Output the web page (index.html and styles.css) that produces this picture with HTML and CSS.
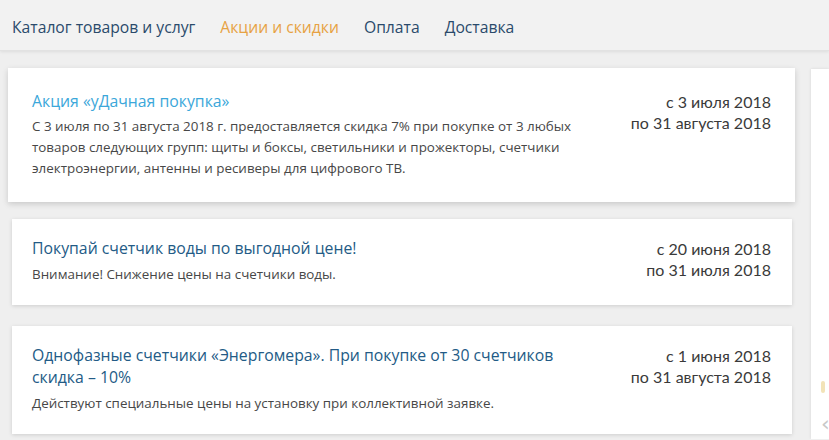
FILE: index.html
```html
<!DOCTYPE html>
<html lang="ru">
<head>
<meta charset="utf-8">
<title>Акции и скидки</title>
<link rel="stylesheet" href="styles.css">
</head>
<body>
<header class="topbar">
  <nav class="nav">
    <a class="nav-link" href="#">Каталог товаров и услуг</a>
    <a class="nav-link nav-link-active" href="#">Акции и скидки</a>
    <a class="nav-link" href="#">Оплата</a>
    <a class="nav-link" href="#">Доставка</a>
  </nav>
</header>
<div class="page">
  <main class="promo-list">
    <article class="promo promo-hover">
      <div class="promo-body">
        <a class="promo-title" href="#">Акция «уДачная покупка»</a>
        <p class="promo-text">С 3 июля по 31 августа 2018 г. предоставляется скидка 7% при покупке от 3 любых товаров следующих групп: щиты и боксы, светильники и прожекторы, счетчики электроэнергии, антенны и ресиверы для цифрового ТВ.</p>
      </div>
      <div class="promo-dates">с 3 июля 2018<br>по 31 августа 2018</div>
    </article>
    <article class="promo">
      <div class="promo-body">
        <a class="promo-title" href="#">Покупай счетчик воды по выгодной цене!</a>
        <p class="promo-text">Внимание! Снижение цены на счетчики воды.</p>
      </div>
      <div class="promo-dates">с 20 июня 2018<br>по 31 июля 2018</div>
    </article>
    <article class="promo">
      <div class="promo-body">
        <a class="promo-title" href="#">Однофазные счетчики «Энергомера». При покупке от 30 счетчиков скидка – 10%</a>
        <p class="promo-text">Действуют специальные цены на установку при коллективной заявке.</p>
      </div>
      <div class="promo-dates">с 1 июня 2018<br>по 31 августа 2018</div>
    </article>
  </main>
  <aside class="sidebar">
    <span class="sidebar-mark"></span>
    <span class="sidebar-arrow">‹</span>
  </aside>
</div>
</body>
</html>
```

FILE: styles.css
```css
html, body {
  margin: 0;
  padding: 0;
}
body {
  background: #efefef;
  font-family: "Open Sans", "Noto Sans", sans-serif;
  width: 829px;
  height: 440px;
  overflow: hidden;
}
.topbar {
  height: 51px;
  background: #f2f2f2;
  border-bottom: 1px solid #e2e2e2;
  box-shadow: 0 1px 3px rgba(0, 0, 0, 0.08);
  box-sizing: border-box;
}
.nav {
  display: flex;
  align-items: center;
  height: 100%;
  padding: 4px 0 0 12px;
  box-sizing: border-box;
  gap: 25px;
}
.nav-link {
  font-size: 15.7px;
  color: #2a4a6b;
  text-decoration: none;
  line-height: 22px;
}
.nav-link-active {
  color: #e7a244;
}
.page {
  display: flex;
  gap: 19px;
  padding-top: 21px;
  height: 388px;
  box-sizing: border-box;
  overflow: hidden;
}
.promo-list {
  width: 780px;
  flex-shrink: 0;
  margin-left: 12px;
  display: flex;
  flex-direction: column;
  gap: 21px;
}
.promo {
  display: flex;
  justify-content: space-between;
  align-items: flex-start;
  background: #fff;
  padding: 18px 21px 20px 20px;
  box-shadow: 0 1px 4px rgba(0, 0, 0, 0.14);
}
.promo-hover {
  margin: -4px -3px -4px -4px;
  padding: 22px 24px 23px 24px;
  box-shadow: 0 2px 6px rgba(0, 0, 0, 0.16);
}
.promo-body {
  width: 570px;
}
.promo-title {
  display: block;
  font-size: 15.8px;
  line-height: 22px;
  color: #235b86;
  text-decoration: none;
}
.promo-hover .promo-title {
  color: #3ba7da;
}
.promo-text {
  margin: 5px 0 0;
  font-size: 13.4px;
  line-height: 21px;
  color: #474747;
}
.promo-hover .promo-text {
  margin-top: 4px;
}
.promo-dates {
  font-family: "Lato", sans-serif;
  font-size: 16px;
  line-height: 21px;
  color: #3a3a3a;
  text-align: right;
  white-space: nowrap;
  padding-top: 1px;
}
.sidebar {
  flex: 1 1 auto;
  min-width: 0;
  margin-top: -3px;
  background: #fff;
  box-shadow: 0 0 3px rgba(0, 0, 0, 0.1);
  display: flex;
  flex-direction: column;
  padding-left: 10px;
}
.sidebar-mark {
  margin-top: 312px;
  width: 4px;
  height: 12px;
  background: #f2e3b8;
  border-radius: 2px;
}
.sidebar-arrow {
  margin-top: 20px;
  font-family: "DejaVu Sans", sans-serif;
  font-size: 22px;
  color: #c8c8c8;
  line-height: 22px;
}
```
